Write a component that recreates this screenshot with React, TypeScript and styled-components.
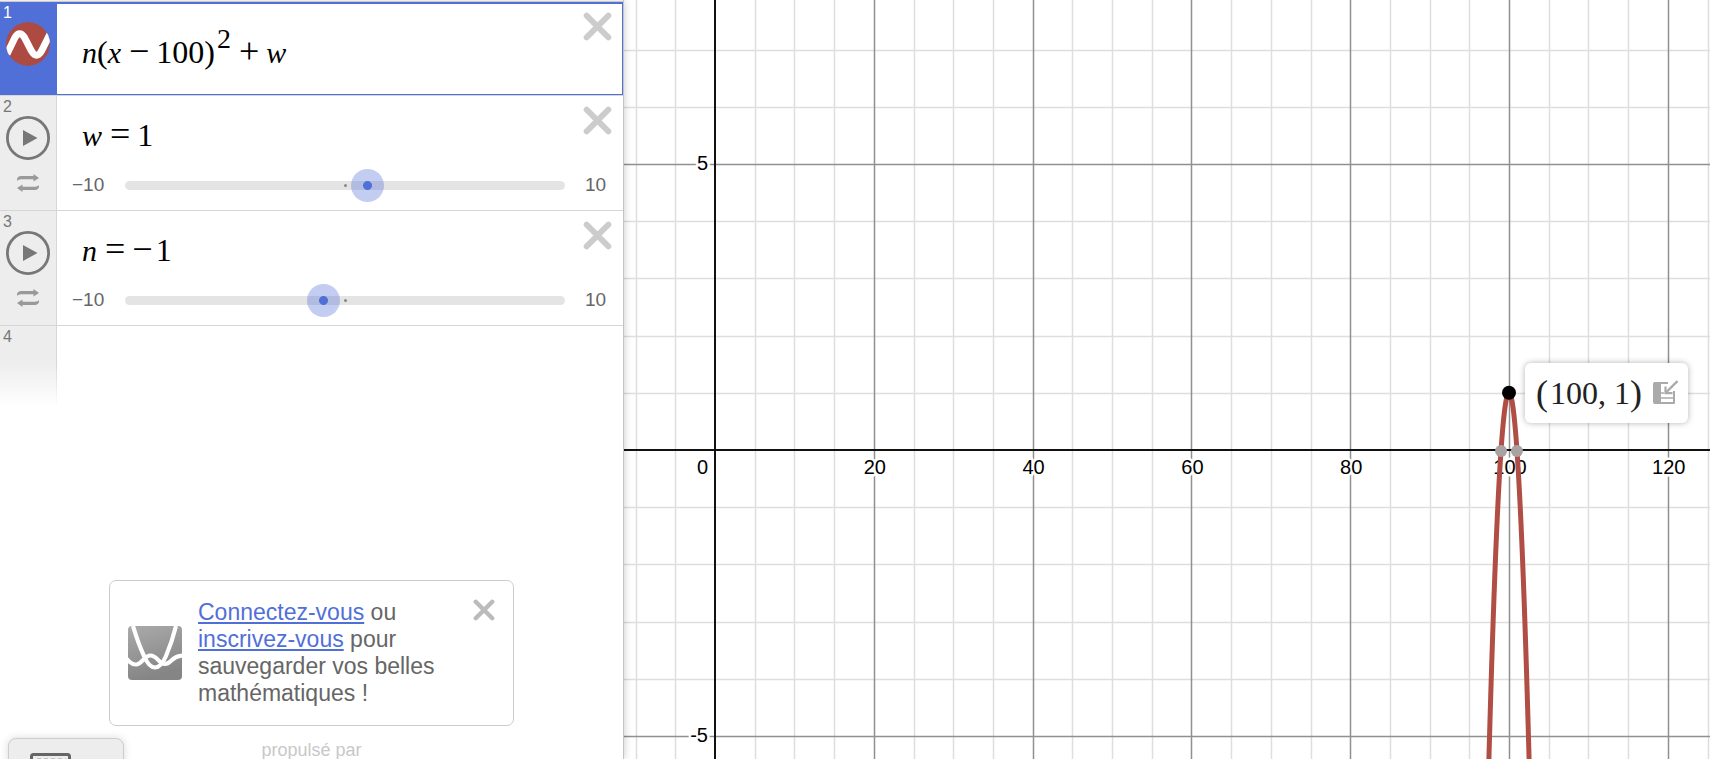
import React, { useLayoutEffect, useRef, useState } from "react";
import styled, { createGlobalStyle, css } from "styled-components";

const GlobalStyle = createGlobalStyle`
  *, *::before, *::after { box-sizing: border-box; }
  body {
    margin: 0;
    background: #fff;
    font-family: "Liberation Sans", Arial, sans-serif;
  }
`;

const Page = styled.div`
  display: flex;
  height: 100vh;
  overflow: hidden;
`;

/* ---------- expression panel ---------- */

const Panel = styled.aside`
  position: relative;
  z-index: 1;
  display: flex;
  flex-direction: column;
  flex: none;
  width: clamp(356px, 36.5vw, 624px);
  border-right: 1px solid #c4c4c4;
  background: #fff;
  box-shadow: 0 0 8px rgba(0, 0, 0, 0.22);
`;

const TopEdge = styled.div`
  flex: none;
  height: 2px;
  background: #ededed;
  border-bottom: 1px solid #ccc;
`;

const List = styled.ol`
  flex: 1;
  min-height: 0;
  margin: 0;
  padding: 0;
  list-style: none;
`;

const Row = styled.li<{ $selected?: boolean }>`
  display: flex;
  min-height: ${(p) => (p.$selected ? 94 : 115)}px;
  border-bottom: 1px solid #d6d6d6;
`;

const EmptyRow = styled.li`
  display: flex;
  height: 80px;
`;

const Gutter = styled.div<{ $selected?: boolean; $fading?: boolean }>`
  display: flex;
  flex-direction: column;
  align-items: center;
  flex: none;
  width: 57px;
  padding-top: 2px;
  border-right: 1px solid #d6d6d6;
  background: #ededed;
  color: #777;
  ${(p) =>
    p.$selected &&
    css`
      background: #5170d7;
      border-color: #5170d7;
      color: #fff;
    `}
  ${(p) =>
    p.$fading &&
    css`
      border-image: linear-gradient(#d6d6d6 45%, #fff) 1;
      background: linear-gradient(#ededed 45%, #fff);
    `}
`;

const Index = styled.span`
  align-self: stretch;
  padding-left: 3px;
  font-size: 16px;
  line-height: 18px;
`;

const IconButton = styled.button`
  display: block;
  flex: none;
  padding: 0;
  border: 0;
  background: none;
  cursor: pointer;
  svg {
    display: block;
  }
`;

const LoopButton = styled(IconButton)`
  margin-top: 14px;
`;

const Body = styled.div<{ $selected?: boolean }>`
  display: flex;
  flex-direction: column;
  flex: 1;
  min-width: 0;
  ${(p) =>
    p.$selected &&
    css`
      border: 1px solid #5170d7;
      border-top-width: 2px;
      border-left: 0;
    `}
`;

const ExpressionLine = styled.div<{ $selected?: boolean }>`
  display: flex;
  justify-content: space-between;
  align-items: flex-start;
  padding: ${(p) => (p.$selected ? "8px 10px 0 25px" : "10px 11px 0 25px")};
`;

const MathText = styled.div<{ $top?: number }>`
  padding-top: ${(p) => p.$top ?? 0}px;
  color: #000;
  font-family: "Liberation Serif", "Times New Roman", serif;
  font-size: 32px;
  line-height: 36px;
  white-space: nowrap;
  i {
    font-size: 30px;
  }
`;

const Sign = styled.span`
  margin-right: 3px;
  font-size: 36px;
  line-height: 0;
`;

const Operator = styled(Sign)`
  margin: 0 7px 0 8px;
`;

const Power = styled.sup`
  margin-left: 2px;
  font-size: 28px;
  line-height: 0;
  vertical-align: 15px;
`;

const SliderLine = styled.label`
  display: flex;
  align-items: center;
  margin-top: 21px;
  padding: 0 14px 0 15px;
  color: #666;
  font-size: 19px;
  line-height: 20px;
`;

const Bound = styled.span<{ $end?: boolean }>`
  flex: none;
  width: ${(p) => (p.$end ? 44 : 53)}px;
  padding-left: ${(p) => (p.$end ? 20 : 0)}px;
`;

const Track = styled.span`
  position: relative;
  display: flex;
  align-items: center;
  flex: 1;
  min-width: 0;
  height: 9px;
  border-radius: 5px;
  background: #e4e4e4;
  &::before {
    content: "";
    position: absolute;
    left: 50%;
    width: 3px;
    height: 3px;
    margin-left: -1px;
    border-radius: 50%;
    background: #888;
  }
`;

const thumb = css`
  width: 33px;
  height: 33px;
  border: 0;
  border-radius: 50%;
  background: radial-gradient(circle, #5170d7 4px, rgba(81, 112, 215, 0.35) 5px);
`;

const Range = styled.input`
  appearance: none;
  position: relative;
  flex: 1;
  height: 33px;
  margin: 0 -17px 0 -16px;
  background: none;
  cursor: pointer;
  &::-webkit-slider-thumb {
    appearance: none;
    ${thumb}
  }
  &::-moz-range-thumb {
    ${thumb}
  }
`;

/* ---------- panel footer ---------- */

const Notice = styled.section`
  display: flex;
  align-items: center;
  flex: none;
  align-self: center;
  width: 405px;
  max-width: 100%;
  min-height: 146px;
  padding: 0 18px;
  border: 1px solid #ccc;
  border-radius: 7px;
  background: #fff;
`;

const NoticeText = styled.p`
  flex: 1;
  margin: 0 20px 0 16px;
  color: #666;
  font-size: 23px;
  line-height: 27px;
`;

const Link = styled.a`
  color: #5170d7;
  text-decoration: underline;
  text-decoration-thickness: 2px;
  text-underline-offset: 2px;
`;

const NoticeClose = styled(IconButton)`
  align-self: flex-start;
  margin-top: 18px;
`;

const Footer = styled.footer`
  display: grid;
  grid-template-columns: 1fr auto 1fr;
  flex: none;
  height: 33px;
  padding: 12px 8px 0;
  overflow: hidden;
`;

const KeyboardButton = styled.button`
  display: flex;
  justify-content: flex-start;
  align-items: flex-start;
  width: 116px;
  height: 56px;
  padding: 14px 21px;
  border: 1px solid #ccc;
  border-radius: 8px;
  background: #ededed;
  box-shadow: 0 0 8px rgba(0, 0, 0, 0.15);
  cursor: pointer;
`;

const Powered = styled.span`
  color: #c8c8c8;
  font-size: 18px;
  line-height: 24px;
`;

/* ---------- graph ---------- */

const GraphArea = styled.main`
  position: relative;
  flex: 1;
  min-width: 0;
  overflow: hidden;
`;

const GraphSvg = styled.svg`
  display: block;
  width: 100%;
  height: 100%;
`;

const AxisLabel = styled.text`
  fill: #000;
  stroke: #fff;
  stroke-width: 5px;
  stroke-linejoin: round;
  paint-order: stroke;
  font-family: "Liberation Sans", Arial, sans-serif;
  font-size: 20px;
`;

const PointLabel = styled.div`
  position: absolute;
  display: flex;
  align-items: center;
  justify-content: space-between;
  width: 163px;
  height: 60px;
  padding: 0 10px 0 11px;
  border-radius: 6px;
  background: #fff;
  box-shadow: 0 0 6px rgba(0, 0, 0, 0.3);
`;

const Coordinates = styled.span`
  display: flex;
  align-items: center;
  color: #222;
  font-family: "Liberation Serif", "Times New Roman", serif;
  font-size: 32px;
  line-height: 36px;
  white-space: pre;
`;

const Paren = styled.span`
  width: 14px;
  font-size: 36px;
`;

/* ---------- icons ---------- */

const Cross = ({ size, color }: { size: number; color: string }) => (
  <svg width={size} height={size} viewBox="0 0 28 28" aria-hidden="true">
    <path d="M3.5 3.5 24.5 24.5M24.5 3.5 3.5 24.5" stroke={color} strokeWidth="5.6" strokeLinecap="round" />
  </svg>
);

const CurveIcon = () => (
  <svg width="44" height="44" viewBox="0 0 44 44" aria-hidden="true">
    <clipPath id="curve-disc">
      <circle cx="22" cy="22" r="22" />
    </clipPath>
    <g clipPath="url(#curve-disc)">
      <circle cx="22" cy="22" r="22" fill="#ad4b42" />
      <path
        d="M1 32L9 15.5Q13.500 8 18.500 15.500L25.500 29Q30.500 37.500 35.500 29L44 12"
        fill="none"
        stroke="#fff"
        strokeWidth="7"
      />
    </g>
  </svg>
);

const PlayIcon = () => (
  <svg width="44" height="44" viewBox="0 0 44 44" aria-hidden="true">
    <circle cx="22" cy="22" r="20.600" fill="none" stroke="#777" strokeWidth="2.800" />
    <path d="M17 14 31.500 22 17 30Z" fill="#777" />
  </svg>
);

const LoopIcon = () => (
  <svg width="22" height="18" viewBox="0 0 22 18" aria-hidden="true">
    <g fill="#999">
      <path d="M0 7V5.500C0 3.500 2 2 4 2H16.500V0L22 4 16.500 7.500V5.300H4C2 5.300 1 6 0 7Z" />
      <path d="M22 11V12.500C22 14.500 20 16 18 16H5.500V18L0 14 5.500 10.500V12.700H18C20 12.700 21 12 22 11Z" />
    </g>
  </svg>
);

const SavedGraphIcon = () => (
  <svg width="54" height="54" viewBox="0 0 54 54" aria-hidden="true">
    <defs>
      <linearGradient id="thumb-fill" x1="0" y1="0" x2="0.3" y2="1">
        <stop offset="0" stopColor="#aaa" />
        <stop offset="1" stopColor="#858585" />
      </linearGradient>
      <clipPath id="thumb-clip">
        <rect width="54" height="54" rx="4" />
      </clipPath>
    </defs>
    <g clipPath="url(#thumb-clip)" fill="none" stroke="#fff" strokeWidth="4.200">
      <rect width="54" height="54" fill="url(#thumb-fill)" stroke="none" />
      <path d="M5 0Q10 17 16 30C19 37 22 41.500 27 41.500S35 37 38 30Q44 16 48 0" />
      <path d="M-2 32C2 37 5 38.500 8 38.500C14 38.500 16 29.500 22.500 29.500S31 38 37 38S44 29.500 55 29.500" />
    </g>
  </svg>
);

const KeyboardIcon = () => (
  <svg width="41" height="28" viewBox="0 0 41 28" aria-hidden="true">
    <rect x="1.500" y="1.500" width="38" height="25" rx="2" fill="none" stroke="#666" strokeWidth="3" />
    <path d="M7 6.500H36M7 12H36M7 17H36" stroke="#999" strokeWidth="2" strokeDasharray="4 3" />
  </svg>
);

const ExportIcon = () => (
  <svg width="26" height="26" viewBox="0 0 26 26" aria-hidden="true">
    <g fill="none" stroke="#aaa" strokeWidth="2">
      <path d="M16 3H3V23H22V11" strokeLinejoin="round" />
      <path d="M9 18H22M9 13H12" strokeWidth="1.400" />
      <path d="M25.500 1 14.500 12" strokeWidth="2.400" />
      <path d="M13.500 6.500V13.200H20.500" strokeWidth="2.200" />
    </g>
    <path d="M1 4Q1 2 3 2H9V24H3Q1 24 1 22Z" fill="#aaa" />
  </svg>
);

/* ---------- pieces ---------- */

const SliderRow = ({ index, name, value }: { index: number; name: string; value: number }) => {
  const [current, setCurrent] = useState(value);
  return (
    <Row>
      <Gutter>
        <Index>{index}</Index>
        <IconButton aria-label={`Animer ${name}`}>
          <PlayIcon />
        </IconButton>
        <LoopButton aria-label="Mode d'animation">
          <LoopIcon />
        </LoopButton>
      </Gutter>
      <Body>
        <ExpressionLine>
          <MathText $top={11}>
            <i>{name}</i>
            <Operator>=</Operator>
            {current < 0 && <Sign>−</Sign>}
            {Math.abs(current)}
          </MathText>
          <IconButton aria-label={`Supprimer l'expression ${index}`}>
            <Cross size={29} color="#ccc" />
          </IconButton>
        </ExpressionLine>
        <SliderLine>
          <Bound>−10</Bound>
          <Track>
            <Range
              type="range"
              min={-10}
              max={10}
              value={current}
              aria-label={name}
              onChange={(e) => setCurrent(Number(e.target.value))}
            />
          </Track>
          <Bound $end>10</Bound>
        </SliderLine>
      </Body>
    </Row>
  );
};

// Position of the origin inside the graph, and pixels per unit on each axis.
const ORIGIN = { x: 91, y: 450 };
const UNIT = { x: 7.94, y: 57.2 };
const toX = (x: number) => ORIGIN.x + x * UNIT.x;
const toY = (y: number) => ORIGIN.y - y * UNIT.y;

const range = (from: number, to: number) =>
  Array.from({ length: Math.max(0, to - from + 1) }, (_, i) => from + i);

const Graph = () => {
  const area = useRef<HTMLElement>(null);
  const [size, setSize] = useState({ w: 0, h: 0 });

  useLayoutEffect(() => {
    const el = area.current;
    if (!el) return;
    const measure = () => setSize({ w: el.clientWidth, h: el.clientHeight });
    measure();
    const observer = new ResizeObserver(measure);
    observer.observe(el);
    return () => observer.disconnect();
  }, []);

  const columns = range(Math.ceil(-ORIGIN.x / (5 * UNIT.x)), Math.floor((size.w - ORIGIN.x) / (5 * UNIT.x)));
  const rows = range(Math.ceil((ORIGIN.y - size.h) / UNIT.y), Math.floor(ORIGIN.y / UNIT.y));
  const parabola = range(-40, 40)
    .map((i) => i / 10)
    .map((d, i) => `${i ? "L" : "M"}${toX(100 + d).toFixed(2)} ${toY(1 - d * d).toFixed(2)}`)
    .join("");

  return (
    <GraphArea ref={area}>
      <GraphSvg role="img" aria-label="Graphique de la parabole">
        {[false, true].map((major) => (
          <g key={String(major)} stroke={major ? "#909090" : "#dedede"} strokeWidth="1.5">
            {columns
              .filter((k) => k !== 0 && (k % 4 === 0) === major)
              .map((k) => {
                const x = Math.round(toX(5 * k)) + 0.5;
                return <line key={`x${k}`} x1={x} x2={x} y1={0} y2={size.h} />;
              })}
            {rows
              .filter((k) => k !== 0 && (k % 5 === 0) === major)
              .map((k) => {
                const y = Math.round(toY(k)) + 0.5;
                return <line key={`y${k}`} x1={0} x2={size.w} y1={y} y2={y} />;
              })}
          </g>
        ))}
        <g stroke="#111" strokeWidth="2">
          <line x1={ORIGIN.x} x2={ORIGIN.x} y1={0} y2={size.h} />
          <line x1={0} x2={size.w} y1={ORIGIN.y} y2={ORIGIN.y} />
        </g>
        {columns
          .filter((k) => k !== 0 && k % 4 === 0)
          .map((k) => (
            <AxisLabel key={k} x={toX(5 * k) + 1} y={474} textAnchor="middle">
              {5 * k}
            </AxisLabel>
          ))}
        <AxisLabel x={ORIGIN.x - 7} y={474} textAnchor="end">
          0
        </AxisLabel>
        {rows
          .filter((k) => k !== 0 && k % 5 === 0)
          .map((k) => (
            <AxisLabel key={k} x={ORIGIN.x - 7} y={toY(k) + 6} textAnchor="end">
              {k}
            </AxisLabel>
          ))}
        <path d={parabola} fill="none" stroke="#b04d44" strokeWidth="5" strokeLinejoin="round" />
        <circle cx={toX(99)} cy={toY(0) + 1} r="6" fill="#a8a2a2" />
        <circle cx={toX(101)} cy={toY(0) + 1} r="6" fill="#a8a2a2" />
        <circle cx={toX(100)} cy={toY(1)} r="7" fill="#000" />
      </GraphSvg>
      <PointLabel style={{ left: Math.round(toX(100)) + 16, top: Math.round(toY(1)) - 30 }}>
        <Coordinates>
          <Paren>(</Paren>100, 1<Paren>)</Paren>
        </Coordinates>
        <IconButton aria-label="Ajouter le point à la liste">
          <ExportIcon />
        </IconButton>
      </PointLabel>
    </GraphArea>
  );
};

export default function App() {
  return (
    <Page>
      <GlobalStyle />
      <Panel>
        <TopEdge />
        <List>
          <Row $selected>
            <Gutter $selected>
              <Index>1</Index>
              <IconButton aria-label="Masquer la courbe">
                <CurveIcon />
              </IconButton>
            </Gutter>
            <Body $selected>
              <ExpressionLine $selected>
                <MathText $top={22}>
                  <i>n</i>(<i>x</i>
                  <Operator>−</Operator>100)<Power>2</Power>
                  <Operator>+</Operator>
                  <i>w</i>
                </MathText>
                <IconButton aria-label="Supprimer l'expression 1">
                  <Cross size={29} color="#ccc" />
                </IconButton>
              </ExpressionLine>
            </Body>
          </Row>
          <SliderRow index={2} name="w" value={1} />
          <SliderRow index={3} name="n" value={-1} />
          <EmptyRow>
            <Gutter $fading>
              <Index>4</Index>
            </Gutter>
          </EmptyRow>
        </List>
        <Notice>
          <SavedGraphIcon />
          <NoticeText>
            <Link href="#connexion">Connectez-vous</Link> ou <Link href="#inscription">inscrivez-vous</Link> pour
            sauvegarder vos belles mathématiques !
          </NoticeText>
          <NoticeClose aria-label="Fermer">
            <Cross size={22} color="#bbb" />
          </NoticeClose>
        </Notice>
        <Footer>
          <KeyboardButton aria-label="Ouvrir le clavier">
            <KeyboardIcon />
          </KeyboardButton>
          <Powered>propulsé par</Powered>
        </Footer>
      </Panel>
      <Graph />
    </Page>
  );
}
